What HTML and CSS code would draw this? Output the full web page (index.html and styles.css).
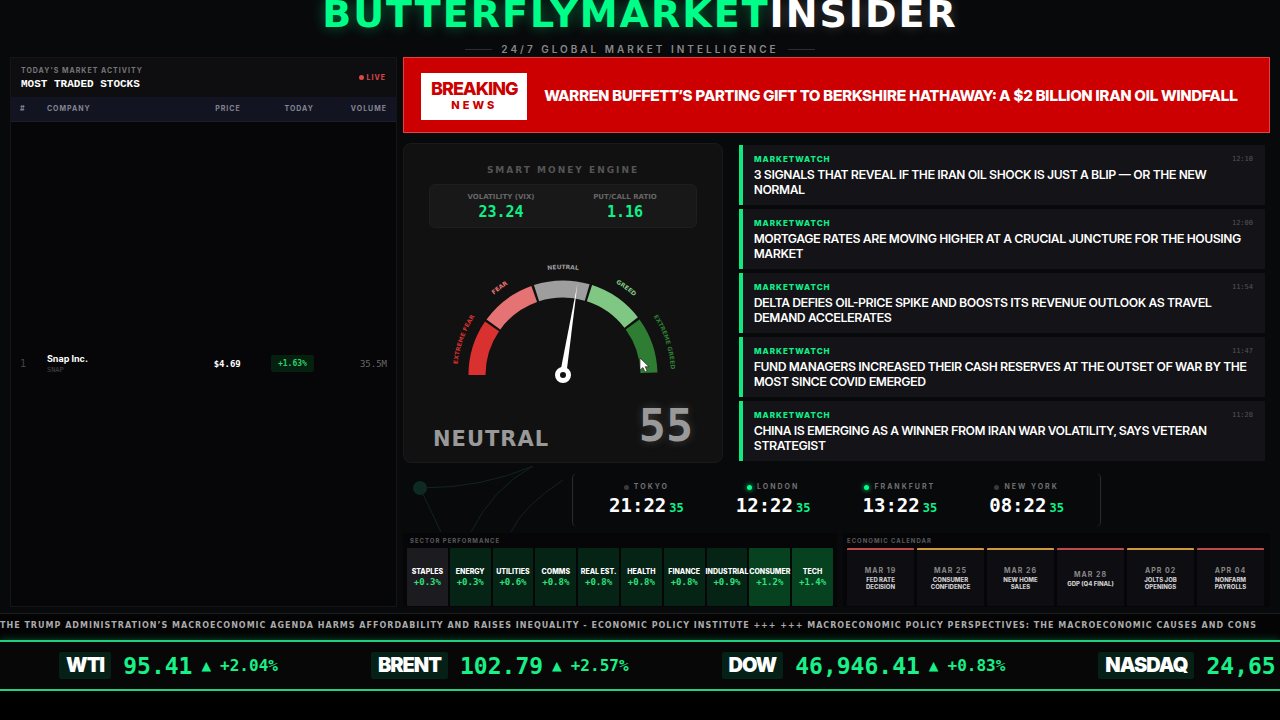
FILE: index.html
```html
<!DOCTYPE html>
<html lang="en">
<head>
    <meta charset="UTF-8">
    <meta name="viewport" content="width=device-width, initial-scale=1.0">
    <title>Butterfly Market Insider</title>
    <link rel="stylesheet" href="styles.css">
</head>
<body>
    <header class="header">
        <h1><span class="brand">BUTTERFLYMARKET</span>INSIDER</h1>
        <p class="tagline">24/7 GLOBAL MARKET INTELLIGENCE</p>
    </header>

    <main class="main">
        <section class="stocks">
            <div class="stocks-head">
                <div>
                    <p class="stocks-sub">TODAY'S MARKET ACTIVITY</p>
                    <h2>MOST TRADED STOCKS</h2>
                </div>
                <span class="live">LIVE</span>
            </div>
            <table class="stocks-table">
                <thead>
                    <tr>
                        <th class="col-rank">#</th>
                        <th class="col-company">COMPANY</th>
                        <th class="col-price">PRICE</th>
                        <th class="col-today">TODAY</th>
                        <th class="col-volume">VOLUME</th>
                    </tr>
                </thead>
                <tbody>
                    <tr>
                        <td class="rank">1</td>
                        <td><div class="company">Snap Inc.</div><div class="symbol">SNAP</div></td>
                        <td class="price">$4.69</td>
                        <td class="today"><span class="change">+1.63%</span></td>
                        <td class="volume">35.5M</td>
                    </tr>
                </tbody>
            </table>
        </section>

        <div class="right">
            <section class="breaking">
                <div class="breaking-badge">
                    <strong>BREAKING</strong>
                    <span>NEWS</span>
                </div>
                <p>WARREN BUFFETT’S PARTING GIFT TO BERKSHIRE HATHAWAY: A $2 BILLION IRAN OIL WINDFALL</p>
            </section>

            <div class="middle">
                <section class="engine">
                    <h2>SMART MONEY ENGINE</h2>
                    <div class="ratios">
                        <div><span class="ratio-label">VOLATILITY (VIX)</span><span class="ratio-value">23.24</span></div>
                        <div><span class="ratio-label">PUT/CALL RATIO</span><span class="ratio-value">1.16</span></div>
                    </div>
                    <svg class="gauge" viewBox="0 0 266 150" width="266" height="150">
                        <defs>
                            <path id="label-arc" d="M27 137 A106 106 0 0 1 239 137"/>
                            <path id="label-arc-outer" d="M25 137 A108 108 0 0 1 241 137"/>
                        </defs>
                        <g fill="none" stroke-width="17">
                            <path d="M47 137 A86 86 0 0 1 219 137" pathLength="180" stroke="#d93030" stroke-dasharray="34.4 400"/>
                            <path d="M47 137 A86 86 0 0 1 219 137" pathLength="180" stroke="#e57373" stroke-dasharray="34.4 400" stroke-dashoffset="-36"/>
                            <path d="M47 137 A86 86 0 0 1 219 137" pathLength="180" stroke="#9e9e9e" stroke-dasharray="34.4 400" stroke-dashoffset="-72"/>
                            <path d="M47 137 A86 86 0 0 1 219 137" pathLength="180" stroke="#81c784" stroke-dasharray="34.4 400" stroke-dashoffset="-108"/>
                            <path d="M47 137 A86 86 0 0 1 219 137" pathLength="180" stroke="#2e7d32" stroke-dasharray="34.4 400" stroke-dashoffset="-144"/>
                        </g>
                        <g class="gauge-labels" text-anchor="middle">
                            <text fill="#d93030"><textPath href="#label-arc" startOffset="11%">EXTREME FEAR</textPath></text>
                            <text fill="#e57373"><textPath href="#label-arc" startOffset="30%">FEAR</textPath></text>
                            <text fill="#9e9e9e"><textPath href="#label-arc" startOffset="50%">NEUTRAL</textPath></text>
                            <text fill="#81c784"><textPath href="#label-arc" startOffset="70%">GREED</textPath></text>
                            <text fill="#2e7d32"><textPath href="#label-arc-outer" startOffset="90%">EXTREME GREED</textPath></text>
                        </g>
                        <g transform="rotate(9 133 137)">
                            <path d="M129.800 137 L133 44 L136.200 137 Z" fill="#fff"/>
                        </g>
                        <circle cx="133" cy="137" r="5.500" fill="#111" stroke="#fff" stroke-width="5"/>
                        <path d="M210 120 v12 l3 -2.500 2 4.500 2.200 -1 -2 -4.300 h3.800 Z" fill="#fff" stroke="#111" stroke-width=".6"/>
                    </svg>
                    <div class="mood">
                        <span class="mood-name">NEUTRAL</span>
                        <span class="mood-score">55</span>
                    </div>
                </section>

                <section class="news">
                    <article>
                        <div class="news-meta"><span>MARKETWATCH</span><time>12:10</time></div>
                        <h3>3 SIGNALS THAT REVEAL IF THE IRAN OIL SHOCK IS JUST A BLIP — OR THE NEW NORMAL</h3>
                    </article>
                    <article>
                        <div class="news-meta"><span>MARKETWATCH</span><time>12:00</time></div>
                        <h3>MORTGAGE RATES ARE MOVING HIGHER AT A CRUCIAL JUNCTURE FOR THE HOUSING MARKET</h3>
                    </article>
                    <article>
                        <div class="news-meta"><span>MARKETWATCH</span><time>11:54</time></div>
                        <h3>DELTA DEFIES OIL-PRICE SPIKE AND BOOSTS ITS REVENUE OUTLOOK AS TRAVEL DEMAND ACCELERATES</h3>
                    </article>
                    <article>
                        <div class="news-meta"><span>MARKETWATCH</span><time>11:47</time></div>
                        <h3>FUND MANAGERS INCREASED THEIR CASH RESERVES AT THE OUTSET OF WAR BY THE MOST SINCE COVID EMERGED</h3>
                    </article>
                    <article>
                        <div class="news-meta"><span>MARKETWATCH</span><time>11:28</time></div>
                        <h3>CHINA IS EMERGING AS A WINNER FROM IRAN WAR VOLATILITY, SAYS VETERAN STRATEGIST</h3>
                    </article>
                </section>
            </div>

            <div class="clock-row">
                <svg class="network" viewBox="0 0 170 66" width="170" height="66" fill="none" stroke="#11251e">
                    <circle cx="17" cy="22" r="7" fill="#0d2b20" stroke="none"/>
                    <path d="M17 22 Q80 22 130 0"/>
                    <path d="M17 22 L38 66"/>
                    <path d="M68 66 Q90 22 130 0"/>
                    <path d="M108 66 Q120 40 160 14"/>
                </svg>
                <section class="clocks">
                    <div class="clock">
                        <span class="city">TOKYO</span>
                        <span class="time">21:22<small>35</small></span>
                    </div>
                    <div class="clock open">
                        <span class="city">LONDON</span>
                        <span class="time">12:22<small>35</small></span>
                    </div>
                    <div class="clock open">
                        <span class="city">FRANKFURT</span>
                        <span class="time">13:22<small>35</small></span>
                    </div>
                    <div class="clock">
                        <span class="city">NEW YORK</span>
                        <span class="time">08:22<small>35</small></span>
                    </div>
                </section>
            </div>

            <div class="bottom">
                <section class="sectors">
                    <h2>SECTOR PERFORMANCE</h2>
                    <div class="sector-list">
                        <div class="sector flat"><span>STAPLES</span><b>+0.3%</b></div>
                        <div class="sector"><span>ENERGY</span><b>+0.3%</b></div>
                        <div class="sector"><span>UTILITIES</span><b>+0.6%</b></div>
                        <div class="sector"><span>COMMS</span><b>+0.8%</b></div>
                        <div class="sector"><span>REAL EST.</span><b>+0.8%</b></div>
                        <div class="sector"><span>HEALTH</span><b>+0.8%</b></div>
                        <div class="sector"><span>FINANCE</span><b>+0.8%</b></div>
                        <div class="sector"><span>INDUSTRIAL</span><b>+0.9%</b></div>
                        <div class="sector strong"><span>CONSUMER</span><b>+1.2%</b></div>
                        <div class="sector strong"><span>TECH</span><b>+1.4%</b></div>
                    </div>
                </section>
                <section class="calendar">
                    <h2>ECONOMIC CALENDAR</h2>
                    <div class="event-list">
                        <div class="event high"><time>MAR 19</time><span>FED RATE DECISION</span></div>
                        <div class="event"><time>MAR 25</time><span>CONSUMER CONFIDENCE</span></div>
                        <div class="event"><time>MAR 26</time><span>NEW HOME SALES</span></div>
                        <div class="event high"><time>MAR 28</time><span>GDP (Q4 FINAL)</span></div>
                        <div class="event"><time>APR 02</time><span>JOLTS JOB OPENINGS</span></div>
                        <div class="event high"><time>APR 04</time><span>NONFARM PAYROLLS</span></div>
                    </div>
                </section>
            </div>
        </div>
    </main>

    <div class="headline-ticker">THE TRUMP ADMINISTRATION’S MACROECONOMIC AGENDA HARMS AFFORDABILITY AND RAISES INEQUALITY - ECONOMIC POLICY INSTITUTE +++ +++ MACROECONOMIC POLICY PERSPECTIVES: THE MACROECONOMIC CAUSES AND CONS</div>

    <footer class="price-ticker">
        <div class="quote"><strong>WTI</strong><span class="last">95.41</span><i>▲</i><span class="pct">+2.04%</span></div>
        <div class="quote"><strong>BRENT</strong><span class="last">102.79</span><i>▲</i><span class="pct">+2.57%</span></div>
        <div class="quote"><strong>DOW</strong><span class="last">46,946.41</span><i>▲</i><span class="pct">+0.83%</span></div>
        <div class="quote"><strong>NASDAQ</strong><span class="last">24,65</span></div>
    </footer>
</body>
</html>
```
FILE: styles.css
```css
* {
    box-sizing: border-box;
}

body {
    margin: 0;
    background-color: #000;
    color: #fff;
    font-family: Inter, "Liberation Sans", sans-serif;
    overflow: hidden;
}

h1, h2, h3, p {
    margin: 0;
}

.header {
    display: flex;
    flex-direction: column;
    align-items: center;
    background-color: #08090b;
}

.header h1 {
    font-family: "DejaVu Sans", sans-serif;
    font-size: 38px;
    font-weight: bold;
    letter-spacing: 2px;
    line-height: 28px;
    height: 42px;
    text-shadow: 0 0 12px rgba(255, 255, 255, 0.2);
}

.header .brand {
    color: #00ff88;
    text-shadow: 0 0 14px rgba(0, 255, 136, 0.4);
}

.tagline {
    display: flex;
    align-items: center;
    gap: 9px;
    color: #888;
    font-size: 10px;
    font-weight: 600;
    letter-spacing: 3px;
    line-height: 15px;
}

.tagline::before, .tagline::after {
    content: "";
    width: 27px;
    height: 1px;
    background-color: #2c2e30;
}

.main {
    display: grid;
    grid-template-columns: 387fr 867fr;
    gap: 6px;
    padding: 0 10px 6px;
    background-color: #08090b;
}

/* Most traded stocks */
.stocks {
    display: flex;
    flex-direction: column;
    border: 1px solid #131518;
    background-color: #060609;
}

.stocks-head {
    display: flex;
    justify-content: space-between;
    align-items: center;
    height: 39px;
    padding: 0 10px;
    background-color: #0e0e11;
}

.stocks-sub {
    color: #777;
    font-size: 7px;
    font-weight: 700;
    letter-spacing: 1px;
    line-height: 12px;
}

.stocks-head h2 {
    font-family: "Liberation Mono", monospace;
    font-size: 11px;
    line-height: 14px;
}

.live {
    display: flex;
    align-items: center;
    gap: 3px;
    color: #e04848;
    font-size: 7px;
    font-weight: 700;
    letter-spacing: 1px;
}

.live::before {
    content: "";
    width: 5px;
    height: 5px;
    border-radius: 50%;
    background-color: #e04848;
}

.stocks-table {
    flex: 1;
    width: 100%;
    table-layout: fixed;
    border-collapse: collapse;
}

.stocks-table thead tr {
    height: 24px;
    background-color: #131422;
    border-bottom: 1px solid #1c1e26;
}

.stocks-table th {
    padding: 0 9px;
    color: #858592;
    font-size: 7px;
    font-weight: 700;
    letter-spacing: 1px;
    text-align: right;
}

.stocks-table td {
    padding: 0 9px;
    text-align: right;
    font-family: "DejaVu Sans Mono", monospace;
    font-size: 9px;
}

.stocks-table th:nth-child(-n+2), .stocks-table td:nth-child(-n+2) {
    text-align: left;
}

.stocks-table .col-rank {
    width: 7%;
}

.stocks-table .col-price {
    width: 29%;
}

.stocks-table .col-today, .stocks-table .col-volume {
    width: 19%;
}

.stocks-table .rank {
    color: #444;
    font-size: 10px;
}

.company {
    font-family: Inter, sans-serif;
    font-weight: 700;
    line-height: 13px;
}

.symbol {
    color: #444;
    font-size: 7px;
    line-height: 10px;
}

.stocks-table .price {
    font-weight: bold;
}

.change {
    display: inline-block;
    padding: 0 7px;
    border-radius: 2px;
    background-color: #05200f;
    color: #2fd06c;
    font-size: 8px;
    font-weight: bold;
    line-height: 17px;
}

.stocks-table .volume {
    color: #666;
}

.right {
    display: flex;
    flex-direction: column;
    min-width: 0;
}

/* Breaking news */
.breaking {
    display: flex;
    align-items: center;
    gap: 17px;
    height: 76px;
    padding: 2px 17px 0;
    border: 1px solid #e84040;
    background-color: #cc0000;
}

.breaking-badge {
    display: flex;
    flex-direction: column;
    align-items: center;
    padding: 6px 10px 8px;
    background-color: #fff;
    color: #c00;
}

.breaking-badge strong {
    font-size: 18px;
    font-weight: 800;
    letter-spacing: -1px;
    line-height: 20px;
}

.breaking-badge span {
    font-size: 11px;
    font-weight: 800;
    letter-spacing: 3px;
    line-height: 13px;
}

.breaking p {
    font-family: "Inter Display", Inter, sans-serif;
    font-size: 15px;
    font-weight: 800;
    line-height: 18px;
}

.middle {
    display: grid;
    grid-template-columns: 320fr 526fr;
    gap: 16px;
    align-items: center;
    padding: 10px 5px 10px 0;
}

/* Smart money engine */
.engine {
    height: 320px;
    padding: 20px 25px 0;
    border: 1px solid #1a1a1a;
    border-radius: 8px;
    background-color: #111;
    font-family: "DejaVu Sans", sans-serif;
}

.engine h2 {
    color: #555;
    font-size: 9px;
    letter-spacing: 2px;
    line-height: 12px;
    text-align: center;
}

.ratios {
    display: flex;
    margin-top: 8px;
    padding: 6px 9px;
    border: 1px solid #1e1e1e;
    border-radius: 6px;
    background-color: #181818;
}

.ratios div {
    flex: 1;
    display: flex;
    flex-direction: column;
    align-items: center;
}

.ratio-label {
    color: #666;
    font-size: 7px;
    font-weight: bold;
    line-height: 12px;
}

.ratio-value {
    color: #10f088;
    font-family: "DejaVu Sans Mono", monospace;
    font-size: 15px;
    font-weight: bold;
    line-height: 18px;
}

.gauge {
    display: block;
    margin: 10px auto 0;
}

.gauge-labels {
    font-size: 6px;
    font-weight: bold;
}

.mood {
    display: flex;
    justify-content: space-between;
    align-items: flex-end;
    padding: 12px 4px 0;
    color: #999;
    font-weight: bold;
}

.mood-name {
    font-size: 21px;
    letter-spacing: 1px;
    line-height: 26px;
}

.mood-score {
    font-family: "DejaVu Sans Mono", monospace;
    font-size: 45px;
    line-height: 52px;
    text-shadow: 0 0 10px rgba(160, 160, 160, 0.3);
}

/* Market news */
.news {
    display: flex;
    flex-direction: column;
    gap: 4px;
}

.news article {
    height: 60px;
    padding: 7px 12px 0 11px;
    border-left: 4px solid #10e880;
    background-color: #141418;
}

.news-meta {
    display: flex;
    justify-content: space-between;
    color: #10f088;
    font-size: 8px;
    font-weight: 800;
    letter-spacing: 1px;
    line-height: 14px;
}

.news-meta time {
    color: #555;
    font-family: "DejaVu Sans Mono", monospace;
    font-size: 7px;
    font-weight: normal;
    letter-spacing: 0;
}

.news h3 {
    margin-top: 1px;
    font-family: "Inter Display", Inter, sans-serif;
    font-size: 12px;
    font-weight: 600;
    line-height: 15px;
}

/* World clocks */
.clock-row {
    position: relative;
    display: flex;
    justify-content: center;
    padding-bottom: 6px;
}

.network {
    position: absolute;
    left: 0;
    top: -7px;
}

.clocks {
    position: relative;
    display: grid;
    grid-template-columns: repeat(4, 1fr);
    width: 61%;
    height: 54px;
    padding: 7px 10px 0;
    border-left: 1px solid #2a2c2e;
    border-right: 1px solid #2a2c2e;
    border-radius: 5px;
    background-color: #08090b;
}

.clock {
    display: flex;
    flex-direction: column;
    align-items: center;
}

.city {
    display: flex;
    align-items: center;
    gap: 5px;
    color: #707070;
    font-size: 7px;
    font-weight: 700;
    letter-spacing: 2px;
    line-height: 14px;
}

.city::before {
    content: "";
    width: 5px;
    height: 5px;
    border-radius: 50%;
    background-color: #3a3a3a;
}

.clock.open .city::before {
    background-color: #00ff88;
    box-shadow: 0 0 5px #00ff88;
}

.time {
    font-family: "DejaVu Sans Mono", monospace;
    font-size: 19px;
    font-weight: bold;
    line-height: 22px;
}

.time small {
    margin-left: 3px;
    color: #10f088;
    font-size: 12px;
}

/* Sectors and calendar */
.bottom {
    display: grid;
    grid-template-columns: 434fr 427fr;
    gap: 6px;
    flex: 1;
}

.bottom h2 {
    color: #5c5c5c;
    font-size: 6px;
    font-weight: 700;
    letter-spacing: 1px;
    line-height: 15px;
}

.sectors, .calendar {
    display: flex;
    flex-direction: column;
    padding: 0 4px 1px;
    min-width: 0;
    background-color: #060609;
}

.calendar {
    padding-right: 6px;
}

.sectors h2 {
    padding-left: 3px;
}

.sector-list {
    display: grid;
    grid-template-columns: repeat(10, minmax(0, 1fr));
    gap: 2px;
}

.sector {
    display: flex;
    flex-direction: column;
    align-items: center;
    justify-content: center;
    height: 58px;
    border-radius: 1px;
    background-color: #062416;
}

.sector.flat {
    background-color: #1b1b20;
}

.sector.strong {
    background-color: #06421f;
}

.sector span {
    font-size: 7px;
    font-weight: 800;
    line-height: 10px;
    white-space: nowrap;
}

.sector b {
    color: #2fe07c;
    font-family: "DejaVu Sans Mono", monospace;
    font-size: 9px;
    line-height: 11px;
}

.event-list {
    display: grid;
    grid-template-columns: repeat(6, minmax(0, 1fr));
    gap: 3px;
}

.event {
    display: flex;
    flex-direction: column;
    align-items: center;
    justify-content: center;
    height: 58px;
    padding: 0 8px;
    border-top: 2px solid #d09a3c;
    border-radius: 1px;
    background-color: #0e0e12;
    text-align: center;
}

.event.high {
    border-top-color: #c04a4a;
}

.event time {
    color: #888;
    font-size: 7px;
    font-weight: 700;
    letter-spacing: 1px;
    line-height: 10px;
}

.event span {
    color: #ccc;
    font-size: 6px;
    font-weight: 800;
    line-height: 7px;
}

/* Tickers */
.headline-ticker {
    height: 27px;
    border-top: 1px solid #1c1d1f;
    background-color: #040405;
    color: #aaa;
    font-family: "DejaVu Sans", sans-serif;
    font-size: 8px;
    font-weight: bold;
    letter-spacing: 1px;
    line-height: 23px;
    white-space: nowrap;
}

.price-ticker {
    display: flex;
    align-items: center;
    gap: 93px;
    height: 51px;
    padding-left: 59px;
    border-top: 2px solid #20d080;
    border-bottom: 2px solid #20d080;
    background-color: #060706;
    box-shadow: 0 0 8px rgba(0, 255, 136, 0.3);
    white-space: nowrap;
}

.quote {
    display: flex;
    align-items: center;
    color: #18f088;
    font-family: "DejaVu Sans Mono", monospace;
}

.quote strong {
    margin-right: 12px;
    padding: 0 7px;
    border-radius: 2px;
    background-color: #052016;
    color: #fff;
    font-family: Inter, sans-serif;
    font-size: 20px;
    font-weight: 900;
    letter-spacing: -1px;
    line-height: 27px;
}

.quote .last {
    font-size: 23px;
    font-weight: bold;
}

.quote i {
    margin: 0 9px;
    font-size: 16px;
    font-style: normal;
}

.quote .pct {
    font-size: 16px;
    font-weight: bold;
}
```
